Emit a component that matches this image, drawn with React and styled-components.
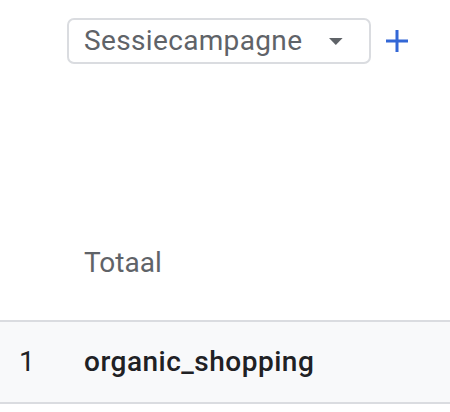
import React from "react"
import styled, { createGlobalStyle } from "styled-components"

const GlobalStyle = createGlobalStyle`
  html, body {
    margin: 0;
    padding: 0;
    background: #ffffff;
    font-family: Roboto, "Noto Sans", "Liberation Sans", sans-serif;
  }
`

const Page = styled.div`
  width: 450px;
  height: 412px;
  overflow: hidden;
  background: #ffffff;
`

const Toolbar = styled.div`
  display: flex;
  align-items: center;
  gap: 14px;
  padding: 18px 0 0 67px;
`

const Dropdown = styled.button`
  display: flex;
  align-items: center;
  gap: 27px;
  box-sizing: border-box;
  width: 304px;
  height: 46px;
  padding: 0 26px 0 15px;
  border: 2px solid #dadce0;
  border-radius: 7px;
  background: #ffffff;
  font-family: inherit;
  font-size: 28px;
  line-height: 32px;
  letter-spacing: 0.35px;
  color: #5f6368;
  cursor: pointer;

  span {
    flex: 1;
    text-align: left;
  }
`

const AddButton = styled.button`
  display: flex;
  align-items: center;
  justify-content: center;
  width: 24px;
  height: 24px;
  padding: 0;
  border: 0;
  background: none;
  cursor: pointer;
`

const Table = styled.div`
  display: grid;
  grid-template-columns: 84px 1fr;
  margin-top: 183px;
`

const HeaderCell = styled.div`
  font-size: 28px;
  line-height: 32px;
  color: #5f6368;
  padding: 0 0 41px ${(p) => (p.$first ? "19px" : "0")};
  border-bottom: 2px solid #dadce0;
`

const DataCell = styled.div`
  font-size: 28px;
  line-height: 32px;
  font-weight: ${(p) => (p.$first ? 400 : 500)};
  letter-spacing: ${(p) => (p.$first ? "0" : "0.5px")};
  color: #202124;
  background: #f8f9fa;
  padding: 24px 0 24px ${(p) => (p.$first ? "19px" : "0")};
  border-bottom: 2px solid #dadce0;
`

const rows = [{ id: 1, campaign: "organic_shopping" }]

export default function App() {
  return (
    <Page>
      <GlobalStyle />
      <Toolbar>
        <Dropdown>
          <span>Sessiecampagne</span>
          <svg width="14" height="7" viewBox="0 0 14 7">
            <path d="M0 0h14L7 7z" fill="#5f6368" />
          </svg>
        </Dropdown>
        <AddButton aria-label="Toevoegen">
          <svg width="24" height="24" viewBox="0 0 24 24">
            <path d="M12 1v22M1 12h22" stroke="#3367d6" strokeWidth="3" fill="none" />
          </svg>
        </AddButton>
      </Toolbar>
      <Table>
        <HeaderCell $first />
        <HeaderCell>Totaal</HeaderCell>
        {rows.map((r) => (
          <React.Fragment key={r.id}>
            <DataCell $first>{r.id}</DataCell>
            <DataCell>{r.campaign}</DataCell>
          </React.Fragment>
        ))}
      </Table>
    </Page>
  )
}
